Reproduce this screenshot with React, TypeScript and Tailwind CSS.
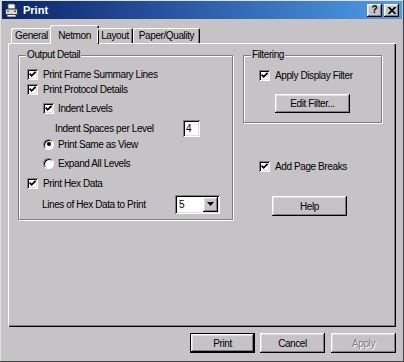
import type { ReactNode } from "react";

const raised =
  "bg-[#c5c3c5] shadow-[inset_-1px_-1px_#000,inset_1px_1px_#fff,inset_-2px_-2px_#808080,inset_2px_2px_#dfdfdf]";
const sunken =
  "bg-white shadow-[inset_1px_1px_#808080,inset_-1px_-1px_#fff,inset_2px_2px_#000,inset_-2px_-2px_#dfdfdf]";

function Check({ checked }: { checked?: boolean }) {
  return (
    <span className={`w-[11px] h-[11px] shrink-0 flex items-center justify-center ${sunken}`}>
      {checked && (
        <svg width="7" height="7" viewBox="0 0 7 7">
          <path d="M0.6 2.6 L2.6 4.8 L6.6 0.8" fill="none" stroke="#000" strokeWidth="1.8" />
        </svg>
      )}
    </span>
  );
}

function Radio({ checked }: { checked?: boolean }) {
  return (
    <span className="w-[11px] h-[11px] shrink-0 rounded-full bg-white border border-t-[#808080] border-l-[#808080] border-b-white border-r-white shadow-[inset_1px_1px_#000] flex items-center justify-center">
      {checked && <span className="w-[4px] h-[4px] rounded-full bg-black" />}
    </span>
  );
}

function Button({
  children,
  className,
  isDefault,
  disabled,
}: {
  children: ReactNode;
  className: string;
  isDefault?: boolean;
  disabled?: boolean;
}) {
  return (
    <div className={`${className} ${isDefault ? "border border-black" : ""}`}>
      <div className={`w-full h-full flex items-center justify-center ${raised}`}>
        <span
          className={
            disabled ? "text-[#808080] [text-shadow:1px_1px_0_#fff]" : "text-black"
          }
        >
          {children}
        </span>
      </div>
    </div>
  );
}

function PrinterIcon() {
  return (
    <svg width="15" height="15" viewBox="0 0 15 15">
      <path d="M4 1 H10 L11 2 V6 H4 Z" fill="#fff" stroke="#555" strokeWidth="0.8" />
      <path d="M1.5 6 H13.5 V11.5 H1.5 Z" fill="#d8d8d8" stroke="#333" strokeWidth="0.9" />
      <path d="M3 11.5 H12 V14 H3 Z" fill="#eee" stroke="#333" strokeWidth="0.8" />
      <rect x="3" y="7.5" width="2" height="1.5" fill="#2bb24c" />
      <rect x="10" y="7.5" width="2" height="1.5" fill="#d22" />
    </svg>
  );
}

export default function App() {
  return (
    <div className="w-[404px] h-[362px] bg-[#c5c3c5] flex flex-col pt-[1px] px-[2px] overflow-hidden font-['Liberation_Sans',Arial,sans-serif] text-[10px] tracking-[-0.4px] text-black select-none shadow-[inset_-1px_-1px_#404040,inset_1px_1px_#dfdfdf]">
      {/* Title bar */}
      <div className="h-[18px] shrink-0 flex items-center bg-[#0a246a] bg-[linear-gradient(to_right,#0a246a,#4f9be6)] pl-[2px] pr-[3px]">
        <PrinterIcon />
        <span className="ml-[4px] text-white font-bold text-[11px] tracking-normal">Print</span>
        <div className="ml-auto flex items-center gap-[2px]">
          <div className={`w-[15px] h-[13px] flex items-center justify-center ${raised}`}>
            <span className="font-bold text-[10px] leading-none text-black tracking-normal">?</span>
          </div>
          <div className={`w-[15px] h-[13px] flex items-center justify-center ${raised}`}>
            <svg width="8" height="7" viewBox="0 0 8 7">
              <path d="M0.5 0 L7.5 7 M7.5 0 L0.5 7" stroke="#000" strokeWidth="1.6" />
            </svg>
          </div>
        </div>
      </div>

      <div className="px-[6px] flex flex-col">
        {/* Tabs */}
        <div className="relative z-10 mt-[6px] h-[18px] flex items-end pl-[3px]">
          <div className="w-[41px] h-[15px] flex items-center justify-center rounded-t-[2px] shadow-[inset_1px_1px_#fff,inset_-1px_0_#000,inset_-2px_0_#808080]">
            General
          </div>
          <div className="w-[49px] h-[19px] -mx-[2px] -mb-[1px] bg-[#c5c3c5] flex items-start justify-center pt-[3px] rounded-t-[2px] shadow-[inset_1px_1px_#fff,inset_-1px_0_#000,inset_-2px_0_#808080]">
            Netmon
          </div>
          <div className="w-[36px] h-[15px] flex items-center justify-center rounded-t-[2px] shadow-[inset_1px_1px_#fff,inset_-1px_0_#000,inset_-2px_0_#808080]">
            Layout
          </div>
          <div className="w-[67px] h-[15px] flex items-center justify-center rounded-t-[2px] shadow-[inset_1px_1px_#fff,inset_-1px_0_#000,inset_-2px_0_#808080]">
            Paper/Quality
          </div>
        </div>

        {/* Tab panel */}
        <div className="h-[284px] flex items-start gap-[10px] pl-[10px] pt-[12px] shadow-[inset_1px_1px_#fff,inset_-1px_-1px_#000,inset_-2px_-2px_#808080]">
          {/* Output Detail */}
          <div className="relative w-[215px] h-[165px] border border-[#808080] shadow-[1px_1px_#fff,inset_1px_1px_#fff] flex flex-col pt-[11px]">
            <span className="absolute left-[7px] -top-[7px] px-[1px] leading-[12px] bg-[#c5c3c5]">
              Output Detail
            </span>
            <div className="h-[14px] flex items-center gap-[5px] pl-[8px]">
              <Check checked />
              <span>Print Frame Summary Lines</span>
            </div>
            <div className="h-[14px] mt-[1px] flex items-center gap-[5px] pl-[8px]">
              <Check checked />
              <span>Print Protocol Details</span>
            </div>
            <div className="h-[14px] mt-[5px] flex items-center gap-[4px] pl-[24px]">
              <Check checked />
              <span>Indent Levels</span>
            </div>
            <div className="h-[14px] mt-[6px] flex items-center pl-[36px]">
              <span className="w-[128px]">Indent Spaces per Level</span>
              <div className={`w-[17px] h-[17px] shrink-0 flex items-center pl-[3px] ${sunken}`}>4</div>
            </div>
            <div className="h-[14px] mt-[2px] flex items-center gap-[4px] pl-[24px]">
              <Radio checked />
              <span>Print Same as View</span>
            </div>
            <div className="h-[14px] mt-[5px] flex items-center gap-[4px] pl-[24px]">
              <Radio />
              <span>Expand All Levels</span>
            </div>
            <div className="h-[14px] mt-[6px] flex items-center gap-[5px] pl-[8px]">
              <Check checked />
              <span>Print Hex Data</span>
            </div>
            <div className="h-[14px] mt-[7px] flex items-center pl-[23px]">
              <span className="w-[133px]">Lines of Hex Data to Print</span>
              <div className={`w-[45px] h-[19px] shrink-0 flex items-center p-[2px] ${sunken}`}>
                <span className="flex-1 pl-[2px]">5</span>
                <div className={`w-[15px] h-full flex items-center justify-center ${raised}`}>
                  <svg width="7" height="4" viewBox="0 0 7 4">
                    <path d="M0 0 H7 L3.5 4 Z" fill="#000" />
                  </svg>
                </div>
              </div>
            </div>
          </div>

          {/* Right column */}
          <div className="w-[139px] flex flex-col">
            <div className="relative h-[68px] border border-[#808080] shadow-[1px_1px_#fff,inset_1px_1px_#fff] flex flex-col">
              <span className="absolute left-[7px] -top-[7px] px-[1px] leading-[12px] bg-[#c5c3c5]">
                Filtering
              </span>
              <div className="h-[14px] mt-[12px] flex items-center gap-[5px] pl-[15px]">
                <Check checked />
                <span>Apply Display Filter</span>
              </div>
              <Button className="w-[75px] h-[19px] mt-[12px] ml-[31px]">Edit Filter...</Button>
            </div>
            <div className="h-[14px] mt-[36px] flex items-center gap-[5px] pl-[16px]">
              <Check checked />
              <span>Add Page Breaks</span>
            </div>
            <Button className="w-[75px] h-[20px] mt-[23px] ml-[29px]">Help</Button>
          </div>
        </div>

        {/* Dialog buttons */}
        <div className="mt-[6px] flex justify-end">
          <Button className="w-[65px] h-[20px]" isDefault>
            Print
          </Button>
          <Button className="w-[65px] h-[20px] ml-[5px]">Cancel</Button>
          <Button className="w-[65px] h-[20px] ml-[6px]" disabled>
            Apply
          </Button>
        </div>
      </div>
    </div>
  );
}
